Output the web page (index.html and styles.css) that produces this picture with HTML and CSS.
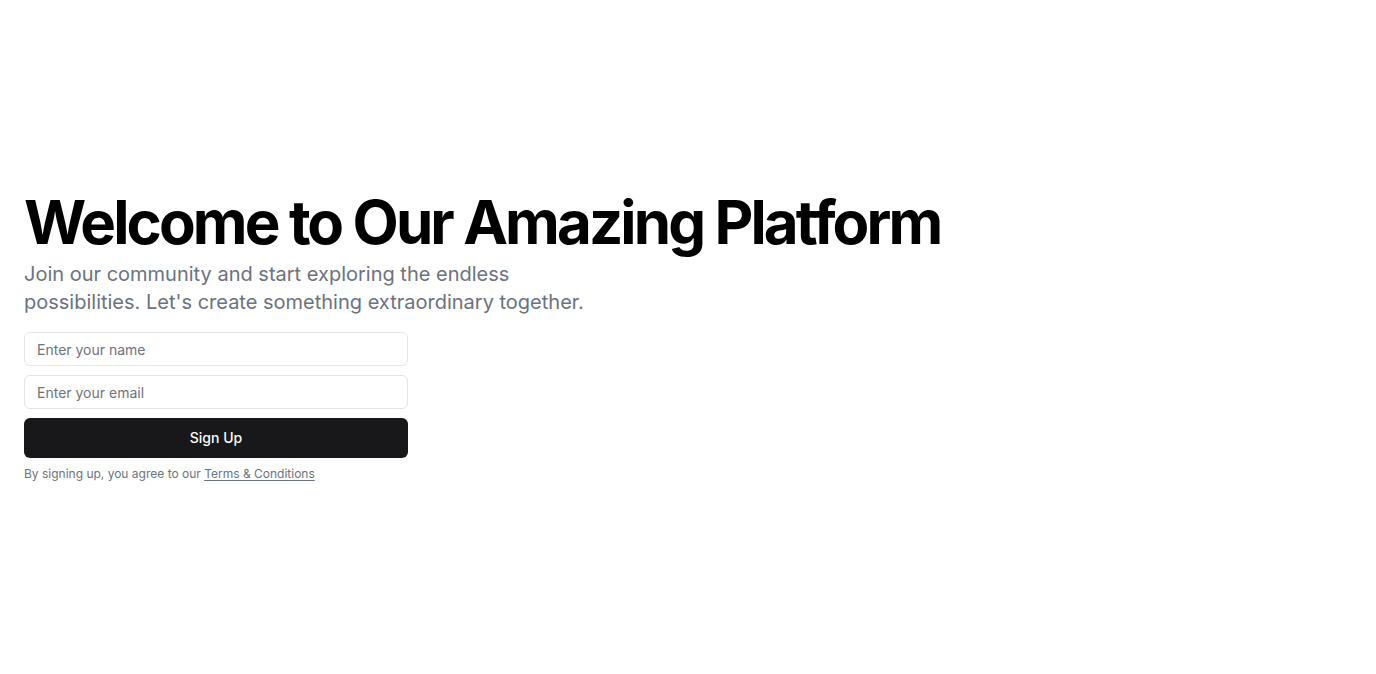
FILE: index.html
```html
<!DOCTYPE html>
<html lang="en">
<head>
<meta charset="utf-8">
<title>Welcome</title>
<link rel="stylesheet" href="styles.css">
</head>
<body>
<main class="hero">
  <div class="content">
    <h1 class="title">Welcome to Our Amazing Platform</h1>
    <p class="subtitle">Join our community and start exploring the endless possibilities. Let's create something extraordinary together.</p>
    <form class="signup">
      <input class="field" type="text" placeholder="Enter your name">
      <input class="field" type="email" placeholder="Enter your email">
      <button class="btn" type="submit">Sign Up</button>
      <p class="note">By signing up, you agree to our <a href="#" class="link">Terms &amp; Conditions</a></p>
    </form>
  </div>
</main>
</body>
</html>
```

FILE: styles.css
```css
* { box-sizing: border-box; }
html, body { margin: 0; padding: 0; background: #fff; }
body { font-family: Inter, "Noto Sans", sans-serif; color: #09090b; }
.hero {
  min-height: 100vh;
  display: flex;
  align-items: center;
  padding: 0 24px;
}
.content { display: flex; flex-direction: column; }
.title {
  margin: 0;
  font-size: 60px;
  line-height: 60px;
  font-weight: 700;
  letter-spacing: -2.9px;
  color: #000;
}
.subtitle {
  margin: 8px 0 0;
  max-width: 600px;
  font-size: 20px;
  line-height: 28px;
  color: #6b7280;
}
.signup {
  margin-top: 16px;
  width: 384px;
  display: flex;
  flex-direction: column;
}
.field {
  height: 34px;
  margin-bottom: 9px;
  border: 1px solid #e4e4e7;
  border-radius: 6px;
  padding: 0 12px;
  font-family: inherit;
  font-size: 14px;
  color: #09090b;
  background: #fff;
  outline: none;
}
.field::placeholder { color: #71717a; }
.btn {
  height: 40px;
  border: none;
  border-radius: 6px;
  padding: 0 16px 2px;
  background: #18181b;
  color: #fafafa;
  font-family: inherit;
  font-size: 14px;
  font-weight: 500;
  cursor: pointer;
}
.note {
  margin: 8px 0 0;
  font-size: 12px;
  line-height: 16px;
  color: #6b7280;
}
.link {
  color: #6b7280;
  text-decoration: underline;
  text-underline-offset: 2px;
}
```
